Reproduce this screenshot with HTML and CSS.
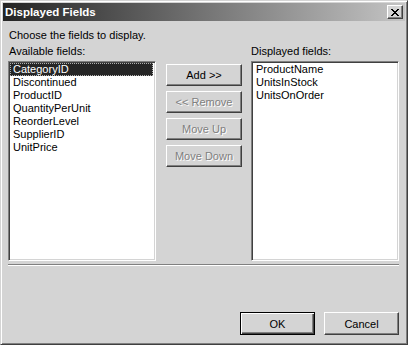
FILE: index.html
```html
<!DOCTYPE html>
<html lang="en">
<head>
    <meta charset="UTF-8">
    <title>Displayed Fields</title>
    <link rel="stylesheet" href="styles.css">
</head>
<body>
    <div class="window">
        <div class="titlebar">
            <span class="title">Displayed Fields</span>
            <button class="close-btn" type="button">
                <svg width="8" height="7" viewBox="0 0 8 7">
                    <path d="M0 0h2v1h-2z M6 0h2v1h-2z M1 1h2v1h-2z M5 1h2v1h-2z M2 2h4v1h-4z M3 3h2v1h-2z M2 4h4v1h-4z M1 5h2v1h-2z M5 5h2v1h-2z M0 6h2v1h-2z M6 6h2v1h-2z" fill="#000"/>
                </svg>
            </button>
        </div>

        <div class="content">
            <p class="intro">Choose the fields to display.</p>

            <div class="fields">
                <div class="field-label">Available fields:</div>
                <div></div>
                <div class="field-label">Displayed fields:</div>

                <ul class="listbox">
                    <li class="selected">CategoryID</li>
                    <li>Discontinued</li>
                    <li>ProductID</li>
                    <li>QuantityPerUnit</li>
                    <li>ReorderLevel</li>
                    <li>SupplierID</li>
                    <li>UnitPrice</li>
                </ul>

                <div class="move-buttons">
                    <button class="btn" type="button">Add &gt;&gt;</button>
                    <button class="btn" type="button" disabled>&lt;&lt; Remove</button>
                    <button class="btn" type="button" disabled>Move Up</button>
                    <button class="btn" type="button" disabled>Move Down</button>
                </div>

                <ul class="listbox">
                    <li>ProductName</li>
                    <li>UnitsInStock</li>
                    <li>UnitsOnOrder</li>
                </ul>
            </div>

            <div class="separator"></div>

            <div class="actions">
                <button class="btn btn-default" type="button">OK</button>
                <button class="btn btn-dialog" type="button">Cancel</button>
            </div>
        </div>
    </div>
</body>
</html>
```

FILE: styles.css
```css
* {
    box-sizing: border-box;
}

body {
    margin: 0;
    font-family: "Liberation Sans", Arial, sans-serif;
    font-size: 11px;
    background-color: #d4d4d4;
}

.window {
    width: 408px;
    height: 345px;
    padding: 2px;
    background-color: #d4d4d4;
    border: 1px solid;
    border-color: #d4d4d4 #404040 #404040 #d4d4d4;
    box-shadow: inset 1px 1px #fff, inset -1px -1px #808080;
}

.titlebar {
    height: 18px;
    display: flex;
    align-items: flex-start;
    justify-content: space-between;
    background: linear-gradient(to right, #242424, #c4c4c4);
}

.title {
    color: #fff;
    font-weight: bold;
    font-size: 11.5px;
    line-height: 18px;
    padding-left: 2px;
}

.close-btn {
    width: 16px;
    height: 14px;
    margin: 2px 2px 0 0;
    padding: 0;
    display: flex;
    align-items: center;
    justify-content: center;
    background-color: #d4d4d4;
    border: 1px solid;
    border-color: #fff #404040 #404040 #fff;
    box-shadow: inset -1px -1px #808080;
}

.content {
    padding: 8px 6px 0 5px;
}

.intro {
    margin: 0 0 3px 1px;
    line-height: 13px;
}

.fields {
    display: grid;
    grid-template-columns: 148px 1fr 148px;
    row-gap: 3px;
}

.field-label {
    line-height: 13px;
    padding-left: 1px;
}

.fields .field-label:nth-child(3) {
    padding-left: 0;
}

.listbox {
    list-style: none;
    margin: 0;
    padding: 1px 0;
    height: 200px;
    background-color: #fff;
    border: 1px solid;
    border-color: #808080 #fff #fff #808080;
    box-shadow: inset 1px 1px #404040, inset -1px -1px #d4d4d4;
}

.listbox li {
    line-height: 13px;
    margin: 0 2px 0 1px;
    padding-left: 3px;
    color: #000;
}

.listbox li.selected {
    background-color: #262626;
    color: #fff;
    outline: 1px dotted #b0b0b0;
    outline-offset: -1px;
}

.move-buttons {
    display: flex;
    flex-direction: column;
    gap: 5px;
    padding-top: 3px;
    margin-left: 10px;
}

.btn {
    width: 76px;
    height: 22px;
    padding: 0;
    font-family: "Liberation Sans", Arial, sans-serif;
    font-size: 11px;
    color: #000;
    background-color: #d4d4d4;
    border: 1px solid;
    border-color: #fff #404040 #404040 #fff;
    box-shadow: inset -1px -1px #808080;
}

.btn:disabled {
    color: #808080;
    text-shadow: 1px 1px 0 #fff;
}

.separator {
    margin-top: 3px;
    height: 2px;
    border-top: 1px solid #808080;
    border-bottom: 1px solid #fff;
    margin-left: 0;
    margin-right: 0;
}

.actions {
    display: flex;
    justify-content: flex-end;
    gap: 9px;
    margin-top: 46px;
}

.actions .btn {
    width: 75px;
    height: 23px;
}

.btn-default {
    border: 1px solid #000;
    box-shadow: inset 1px 1px #fff, inset -1px -1px #404040, inset -2px -2px #808080;
}
```
